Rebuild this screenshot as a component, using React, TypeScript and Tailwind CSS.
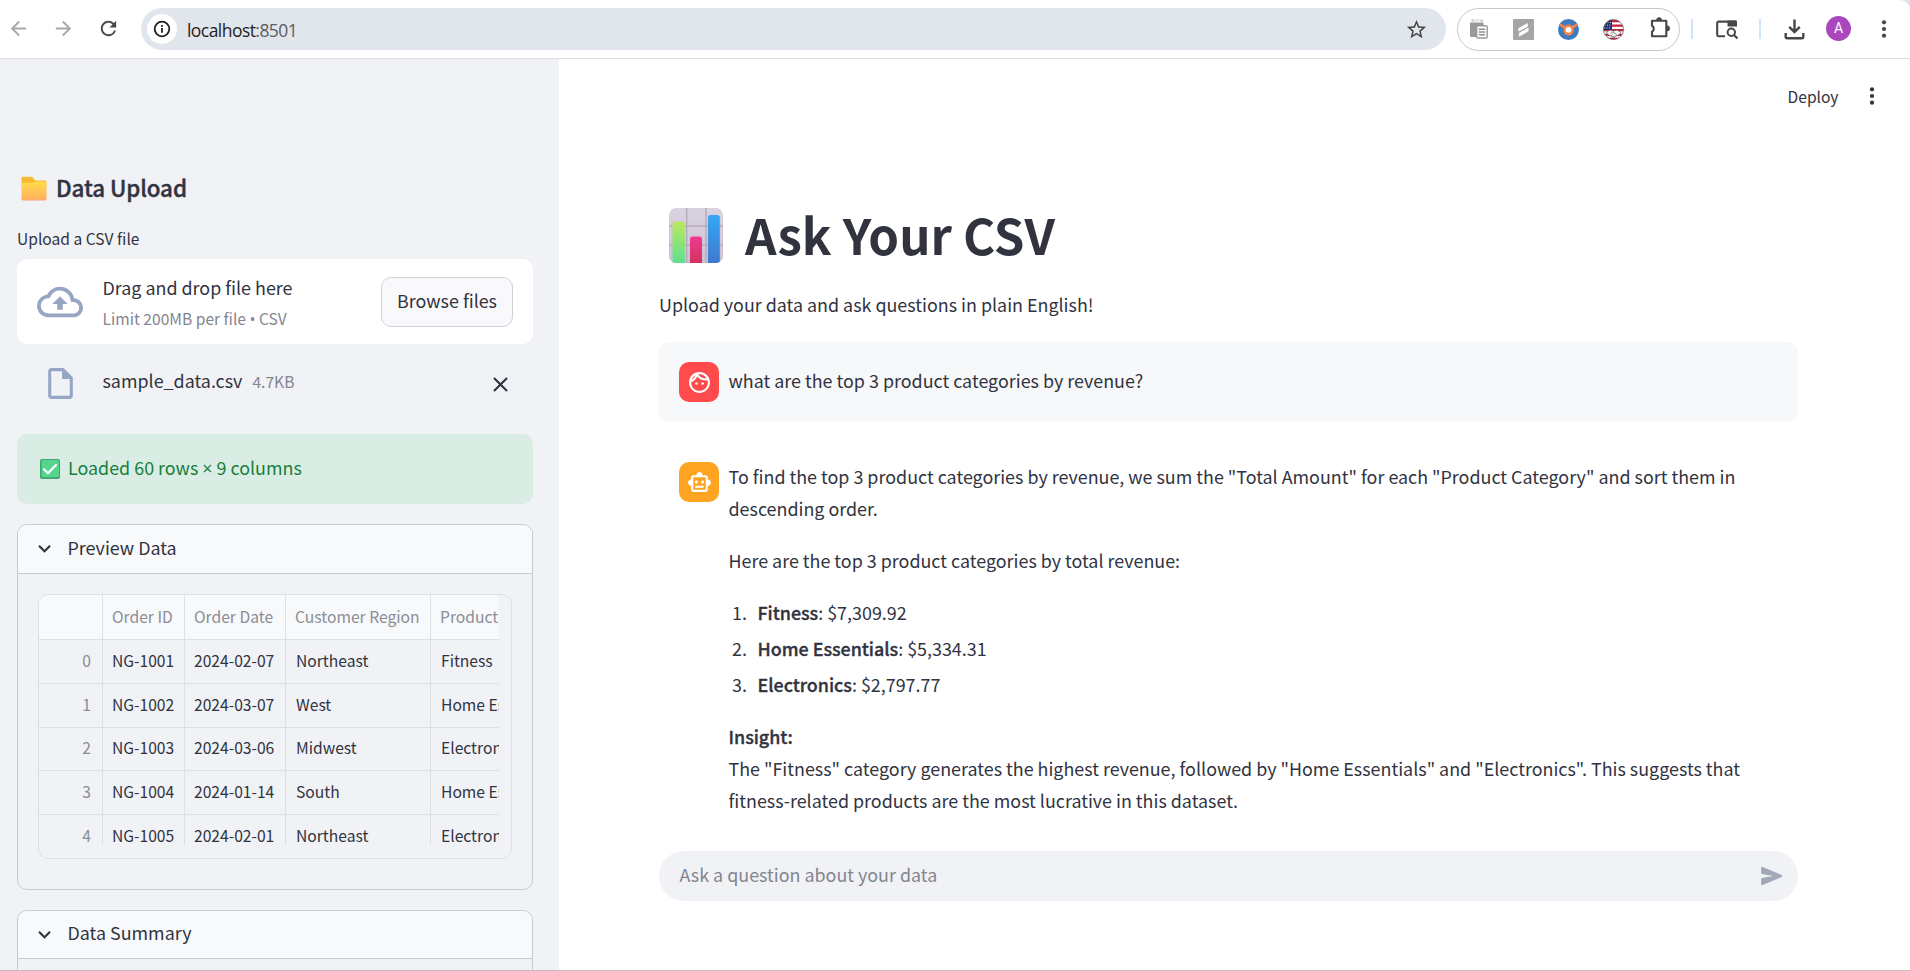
import type { ReactNode } from "react";
import {
  MdArrowBack,
  MdArrowForward,
  MdClose,
  MdKeyboardArrowDown,
  MdOutlineCloudUpload,
  MdOutlineFace,
  MdOutlineInsertDriveFile,
  MdOutlineSmartToy,
  MdRefresh,
  MdStarBorder,
} from "react-icons/md";

const rows = [
  { index: 0, id: "NG-1001", date: "2024-02-07", region: "Northeast", product: "Fitness", height: "h-[44px]" },
  { index: 1, id: "NG-1002", date: "2024-03-07", region: "West", product: "Home Essentials", height: "h-[44px]" },
  { index: 2, id: "NG-1003", date: "2024-03-06", region: "Midwest", product: "Electronics", height: "h-[43px]" },
  { index: 3, id: "NG-1004", date: "2024-01-14", region: "South", product: "Home Essentials", height: "h-[44px]" },
  { index: 4, id: "NG-1005", date: "2024-02-01", region: "Northeast", product: "Electronics", height: "h-[44px]" },
];

const results = [
  { name: "Fitness", value: "$7,309.92" },
  { name: "Home Essentials", value: "$5,334.31" },
  { name: "Electronics", value: "$2,797.77" },
];

function FolderEmoji() {
  return (
    <svg width="26" height="26" viewBox="0 0 26 26">
      <defs>
        <linearGradient id="folderFront" x1="0" y1="0" x2="0" y2="1">
          <stop offset="0" stopColor="#ffdc4c" />
          <stop offset="0.9" stopColor="#ffb35c" />
          <stop offset="1" stopColor="#f5a57c" />
        </linearGradient>
      </defs>
      <path d="M.5 2.3C.5 1.300 1.200.8 2 .8h8c.7 0 1.200.3 1.600.7l2.200 2.300c.4.4.9.6 1.400.6H24c.9 0 1.500.6 1.500 1.500V10H.5z" fill="#f9ba33" />
      <path d="M.5 8c0-.8.6-1.300 1.400-1.300h9.600c.8 0 1.300-.2 1.900-.6.5-.3 1-.4 1.600-.4h9c.9 0 1.500.6 1.500 1.500v15.600c0 1-.7 1.700-1.700 1.700H2.200C1.200 24.500.5 23.800.5 22.800z" fill="url(#folderFront)" />
    </svg>
  );
}

function CheckEmoji() {
  return (
    <svg width="20" height="20" viewBox="0 0 20 20">
      <rect width="20" height="20" rx="2" fill="#3fa372" />
      <rect x="1.500" y="1" width="17.500" height="17.300" rx="1.500" fill="#55d58c" />
      <path d="M4 10.300l4 4 8-8.300" fill="none" stroke="#fff" strokeWidth="2.200" strokeLinecap="round" strokeLinejoin="round" />
    </svg>
  );
}

function ChartEmoji() {
  return (
    <svg width="54" height="55" viewBox="0 0 54 55">
      <defs>
        <linearGradient id="panel" x1="0" y1="0" x2="0" y2="1">
          <stop offset="0" stopColor="#dad3df" />
          <stop offset="1" stopColor="#cdc0d6" />
        </linearGradient>
        <linearGradient id="barGreen" x1="0" y1="0" x2="0" y2="1">
          <stop offset="0" stopColor="#b9e860" />
          <stop offset="1" stopColor="#5fe08c" />
        </linearGradient>
        <linearGradient id="barPink" x1="0" y1="0" x2="0" y2="1">
          <stop offset="0" stopColor="#f0388f" />
          <stop offset="1" stopColor="#d3345f" />
        </linearGradient>
        <linearGradient id="barBlue" x1="0" y1="0" x2="0" y2="1">
          <stop offset="0" stopColor="#35a7f5" />
          <stop offset="1" stopColor="#3f78cf" />
        </linearGradient>
        <clipPath id="panelClip">
          <rect width="54" height="55" rx="7" />
        </clipPath>
      </defs>
      <g clipPath="url(#panelClip)">
        <rect width="54" height="55" fill="url(#panel)" />
        <path d="M17.700 0v55M37 0v55M0 18h54M0 37.300h54" stroke="#b5adb9" strokeWidth="1.500" />
        <path d="M3.500 16q0-2.500 2.500-2.500h7.300q2.500 0 2.500 2.500v39H3.500z" fill="url(#barGreen)" />
        <path d="M21 31q0-2.500 2.500-2.500h7q2.500 0 2.500 2.500v24H21z" fill="url(#barPink)" />
        <path d="M39 9.500Q39 7 41.500 7h6.800q2.500 0 2.500 2.500V55H39z" fill="url(#barBlue)" />
      </g>
    </svg>
  );
}

function PasteIcon() {
  return (
    <svg width="18" height="20" viewBox="0 0 18 20">
      <path d="M1.500 1.500h2.200M10.500 1.500h2.300" stroke="#b9b9b9" strokeWidth="2" />
      <path d="M4.500.3h5v2.200h-5z" fill="#e3e3e3" />
      <path d="M0 3.500h13.500V7H6v11H1.500A1.500 1.500 0 010 16.500z" fill="#9a9a9a" />
      <rect x="6.700" y="6.700" width="10.500" height="12.300" rx="1.200" fill="#fff" stroke="#9a9a9a" strokeWidth="1.400" />
      <path d="M8.800 10.200h6.400M8.800 13h6.400M8.800 15.800h6.400" stroke="#8e8e8e" strokeWidth="1.400" />
    </svg>
  );
}

function SlashIcon() {
  return (
    <svg width="21" height="21" viewBox="0 0 21 21">
      <rect width="21" height="21" rx="1" fill="#a5a5a5" />
      <path d="M5.500 9.600l9-5.200v3.400L6 12.600zM6.200 14l9-5v3.200l-9 5.100z" fill="#fff" stroke="#fff" strokeWidth=".6" />
      <path d="M5.300 13.300l10-5.300" stroke="#a5a5a5" strokeWidth="1" />
    </svg>
  );
}

function OrbitIcon() {
  return (
    <svg width="21" height="21" viewBox="0 0 21 21">
      <circle cx="10.500" cy="10.500" r="10.500" fill="#3d7bc1" />
      <path d="M.9 6.200L2 4.300l5 2.600a5 5 0 017 0l5-2.600 1.100 1.900-4.800 3.200a5.200 5.200 0 11-9.600 0z" fill="#f5834a" />
      <circle cx="10.500" cy="10.800" r="2.900" fill="#fff" />
    </svg>
  );
}

function FlagIcon() {
  return (
    <svg width="21" height="21" viewBox="0 0 21 21">
      <defs>
        <clipPath id="flagClip">
          <circle cx="10.500" cy="10.500" r="10" />
        </clipPath>
      </defs>
      <g clipPath="url(#flagClip)">
        <rect width="21" height="21" fill="#fff" />
        <path d="M0 2h21M0 6.600h21M0 11.200h21M0 15.800h21M0 20h21" stroke="#c8213b" strokeWidth="2.300" />
        <rect width="9" height="11" fill="#22326e" />
        <path d="M2 3.500h6M1.500 6.200h6.500M1 8.900h7" stroke="#cfd4e8" strokeWidth="1" strokeDasharray="1 1.500" />
        <path d="M3.500 13l3.500-2 3.500 1 3.500-1 3.800 2.200-1.500 2.300-5.800 3-5.800-3z" fill="#f6f6f6" stroke="#555" strokeWidth=".7" />
        <path d="M7.500 15l2.200-2.200 4.300 3.400M8 17l1.500-1.500M10 18l1.300-1.300" fill="none" stroke="#555" strokeWidth=".7" />
      </g>
      <circle cx="10.500" cy="10.500" r="10" fill="none" stroke="#5a4a5c" strokeWidth=".7" />
    </svg>
  );
}

function PuzzleIcon() {
  return (
    <svg width="21" height="21" viewBox="0 0 21 21">
      <path d="M2 3.800h14.300v15.400H2v-4.500a3.400 3.400 0 000-6z" fill="none" stroke="#474747" strokeWidth="2.100" strokeLinejoin="round" />
      <path d="M6.500 3.200a2.600 2.600 0 015.200 0zM17 8.700a2.700 2.700 0 010 5.400z" fill="#474747" stroke="#474747" strokeWidth=".6" />
    </svg>
  );
}

function TabSearchIcon() {
  return (
    <svg width="22" height="20" viewBox="0 0 22 20">
      <path d="M9 16.300H2.600A1.400 1.400 0 011.200 15V3A1.400 1.400 0 012.600 1.600H19.400V6" fill="none" stroke="#474747" strokeWidth="2.100" />
      <path d="M11.500.6h8.200A1.300 1.300 0 0121 1.900v4.700h-9.500z" fill="#474747" />
      <circle cx="15.300" cy="12.200" r="3.700" fill="#fff" stroke="#474747" strokeWidth="2" />
      <path d="M18 15l3.500 3.500" stroke="#474747" strokeWidth="2.200" />
    </svg>
  );
}

function DownloadIcon() {
  return (
    <svg width="21" height="21" viewBox="0 0 21 21">
      <path d="M10.500.5v12M5.200 7.800l5.300 5.300 5.300-5.300" fill="none" stroke="#474747" strokeWidth="2.400" />
      <path d="M1.700 14v3.700a1.500 1.500 0 001.500 1.500h14.600a1.500 1.500 0 001.500-1.500V14" fill="none" stroke="#474747" strokeWidth="2.400" />
    </svg>
  );
}

function Dots({ className }: { className: string }) {
  return (
    <svg width="6" height="20" viewBox="0 0 6 20" className={className} fill="currentColor">
      <circle cx="3" cy="3.300" r="2.100" />
      <circle cx="3" cy="10" r="2.100" />
      <circle cx="3" cy="16.700" r="2.100" />
    </svg>
  );
}

function SendIcon() {
  return (
    <svg width="26" height="26" viewBox="0 0 24 24" fill="#a3a8b8">
      <path d="M3.400 20.400l17.450-7.480a1 1 0 000-1.840L3.400 3.600a.993.993 0 00-1.390.91L2 9.120c0 .5.370.930.870.990L13 12 2.870 13.880c-.5.070-.870.5-.870 1l.010 4.610c0 .710.730 1.200 1.390.910z" />
    </svg>
  );
}

function BrowserBar() {
  return (
    <div className="bg-[#dfe3ea]">
      <header className="flex h-[59px] items-center rounded-tr-[10px] border-b border-[#dcdee1] bg-white">
        <div className="flex h-full items-center pb-0.5 pl-[7px] text-[#a9a9a9]">
          <MdArrowBack className="size-[23px]" />
          <MdArrowForward className="ml-[22px] size-[23px]" />
          <MdRefresh className="ml-[22px] size-[23px] text-[#474747]" />
        </div>
        <div className="ml-[21px] flex h-[42px] w-[1305px] items-center rounded-full bg-[#e1e6ed] pl-1.5">
          <div className="flex size-[30px] items-center justify-center rounded-full bg-white">
            <svg width="18" height="18" viewBox="0 0 18 18">
              <circle cx="9" cy="9" r="7.300" fill="none" stroke="#1f1f1f" strokeWidth="1.800" />
              <path d="M9 8v4.700M9 5v1.800" stroke="#1f1f1f" strokeWidth="1.800" />
            </svg>
          </div>
          <span className="ml-2.5 pt-px font-['Open_Sans',sans-serif] text-[17.500px] leading-6 tracking-[-0.550px] text-[#1f1f1f]">
            localhost<span className="text-[#5a5d61]">:8501</span>
          </span>
          <MdStarBorder className="mr-[18px] ml-auto size-[23px] text-[#474747]" />
        </div>
        <div className="ml-[11px] flex h-[43px] w-[223px] items-center rounded-full border border-[#c7c7c7] pl-3">
          <PasteIcon />
          <span className="ml-[25px]"><SlashIcon /></span>
          <span className="ml-6"><OrbitIcon /></span>
          <span className="ml-6"><FlagIcon /></span>
          <span className="ml-[26px] pb-[3px]"><PuzzleIcon /></span>
        </div>
        <div className="ml-[11px] h-5 w-0.5 bg-[#d3e3fd]" />
        <span className="ml-[23px] pt-0.5"><TabSearchIcon /></span>
        <div className="ml-[21px] h-5 w-0.5 bg-[#d3e3fd]" />
        <span className="ml-[23px]"><DownloadIcon /></span>
        <div className="mb-0.5 ml-[21px] flex size-[25px] items-center justify-center rounded-full bg-[#ab47bc] font-['Roboto',sans-serif] text-[14px] text-white">
          A
        </div>
        <Dots className="mb-px ml-[30px] text-[#474747]" />
      </header>
    </div>
  );
}

function ExpanderHeader({ title, className }: { title: string; className: string }) {
  return (
    <div className={`flex items-center border-b border-[#c8cad1] bg-[#f8f9fb] pl-[14px] ${className}`}>
      <MdKeyboardArrowDown className="mb-px size-[25px]" />
      <span className="ml-[10.500px] pb-1">{title}</span>
    </div>
  );
}

function Cell({ className, children }: { className: string; children?: ReactNode }) {
  return (
    <div className={`shrink-0 border-r border-b border-[#dddfe4] pr-1 pl-[9px] ${className}`}>
      <div className="flex h-full items-center whitespace-nowrap">{children}</div>
    </div>
  );
}

function DataTable() {
  return (
    <div className="h-[265px] w-[474px] overflow-hidden rounded-[10px] border border-[#dddfe4]">
      <div className="h-[250px] w-[460px] overflow-hidden text-[15.650px] leading-5">
        <div className="flex h-[45px] w-[560px] bg-[#f8f9fb] text-[#8b8d97]">
          <Cell className="w-[64px]" />
          <Cell className="w-[82px]">Order ID</Cell>
          <Cell className="w-[101px]">Order Date</Cell>
          <Cell className="w-[145px]">Customer Region</Cell>
          <Cell className="w-[168px]">Product Category</Cell>
        </div>
        {rows.map((row) => (
          <div key={row.index} className={`flex w-[560px] ${row.height}`}>
            <Cell className="w-[64px] pb-0.5">
              <span className="ml-auto pr-[7px] text-[#8b8d97]">{row.index}</span>
            </Cell>
            <Cell className="w-[82px] pb-0.5">{row.id}</Cell>
            <Cell className="w-[101px] pb-0.5">{row.date}</Cell>
            <Cell className="w-[145px] pb-0.5"><span className="pl-px">{row.region}</span></Cell>
            <Cell className="w-[168px] pb-0.5"><span className="pl-px">{row.product}</span></Cell>
          </div>
        ))}
      </div>
    </div>
  );
}

function Sidebar() {
  return (
    <aside className="w-[559px] shrink-0 overflow-hidden bg-[#f0f2f6] pt-[113px] pr-[26px] pl-[17px]">
      <h2 className="flex h-[30px] items-center text-[22.400px] leading-[30px] font-medium tracking-[-0.100px] [-webkit-text-stroke:0.4px_#31333f]">
        <span className="mr-[9px] ml-1 pt-1"><FolderEmoji /></span>
        Data Upload
      </h2>
      <p className="mt-[23px] text-[15.600px] leading-[26px]">Upload a CSV file</p>
      <div className="mt-2 flex h-[85px] items-center rounded-[10px] bg-white pr-5 pl-5">
        <MdOutlineCloudUpload className="size-[46px] text-[#98a6c6]" />
        <div className="mt-0.5 ml-[19.500px] flex flex-col gap-[7px]">
          <span className="leading-6">Drag and drop file here</span>
          <span className="text-[15.600px] leading-6 text-[#83858f]">
            Limit 200MB per file <span className="font-['Open_Sans',sans-serif] text-[16px] leading-4">•</span> CSV
          </span>
        </div>
        <button className="ml-auto h-[50px] w-[132px] rounded-[10px] border border-[#d0d2d8] bg-[#f9f9fb] pb-1 leading-6">
          Browse files
        </button>
      </div>
      <div className="flex h-[90px] items-start pt-[21px] pr-5 pl-[24.500px]">
        <MdOutlineInsertDriveFile className="size-[37px] text-[#98a6c6]" />
        <span className="mt-[3px] ml-6 leading-6">sample_data.csv</span>
        <span className="mt-[3px] ml-2.5 text-[15.600px] leading-[26px] text-[#83858f]">4.7KB</span>
        <MdClose className="mt-[7px] ml-auto size-[25px]" />
      </div>
      <div className="flex h-[70px] items-center rounded-[10px] bg-[#daede5] pl-[23px] text-[#177f3b]">
        <CheckEmoji />
        <span className="ml-2 pb-0.5 whitespace-pre">
          Loaded 60 rows <span className="font-['Open_Sans',sans-serif]">×</span> 9 columns
        </span>
      </div>
      <section className="mt-5 h-[366px] overflow-hidden rounded-[10px] border border-[#c8cad1]">
        <ExpanderHeader title="Preview Data" className="h-[49px]" />
        <div className="pt-5 pl-5">
          <DataTable />
        </div>
      </section>
      <section className="mt-5 h-[366px] overflow-hidden rounded-[10px] border border-[#c8cad1]">
        <ExpanderHeader title="Data Summary" className="h-12" />
      </section>
    </aside>
  );
}

function Strong({ children }: { children: ReactNode }) {
  return <strong className="font-medium tracking-[-0.020px] [-webkit-text-stroke:0.35px_#31333f]">{children}</strong>;
}

function Chat() {
  return (
    <main className="flex min-w-0 grow flex-col bg-white pr-[112px] pl-[100px]">
      <div className="mr-[-112px] flex h-[75px] shrink-0 items-center justify-end pr-[35.500px] text-[15.600px]">
        <span className="pb-0.5 leading-6">Deploy</span>
        <Dots className="mb-px ml-[30px]" />
      </div>
      <h1 className="mt-[67px] flex h-[66px] items-center text-[49.200px] leading-[66px] font-bold">
        <span className="mr-[22px] ml-[10px] pt-0.5"><ChartEmoji /></span>
        Ask Your CSV
      </h1>
      <p className="mt-[21px] leading-8">Upload your data and ask questions in plain English!</p>
      <div className="mt-[22px] flex h-20 shrink-0 items-start rounded-[10px] bg-[#f7f8fa] p-5">
        <div className="flex size-10 items-center justify-center rounded-[10px] bg-[#ff4b4b]">
          <MdOutlineFace className="size-[25px] text-white" />
        </div>
        <p className="mt-0.5 ml-[9.500px] leading-8">what are the top 3 product categories by revenue?</p>
      </div>
      <div className="mt-10 flex items-start pl-5">
        <div className="flex size-10 shrink-0 items-center justify-center rounded-[10px] bg-[#ffa421]">
          <MdOutlineSmartToy className="size-[25px] text-white" />
        </div>
        <div className="mt-[-2px] ml-[9.500px] leading-8">
          <p className="whitespace-nowrap">
            To find the top 3 product categories by revenue, we sum the "Total Amount" for each "Product Category" and sort them in
            <br />
            descending order.
          </p>
          <p className="mt-5">Here are the top 3 product categories by total revenue:</p>
          <ol className="mt-5 flex flex-col gap-1 pl-[3.500px]">
            {results.map((item, i) => (
              <li key={item.name} className="flex">
                <span className="w-[25.500px]">{i + 1}.</span>
                <span>
                  <Strong>{item.name}</Strong>: {item.value}
                </span>
              </li>
            ))}
          </ol>
          <p className="mt-5 whitespace-nowrap">
            <Strong>Insight:</Strong>
            <br />
            The "Fitness" category generates the highest revenue, followed by "Home Essentials" and "Electronics". This suggests that
            <br />
            fitness-related products are the most lucrative in this dataset.
          </p>
        </div>
      </div>
      <div className="mt-[35px] flex h-[50px] shrink-0 items-center rounded-full bg-[#f0f2f6] pr-[13px] pl-[20.500px]">
        <span className="pb-[5px] leading-6 text-[#83858f]">Ask a question about your data</span>
        <span className="ml-auto"><SendIcon /></span>
      </div>
    </main>
  );
}

export default function App() {
  return (
    <div className="flex h-[971px] w-[1910px] flex-col overflow-hidden border-b border-[#bdbdbd] bg-white font-['Noto_Sans_CJK_SC',sans-serif] text-[17.900px] text-[#31333f]">
      <BrowserBar />
      <div className="flex min-h-0 grow">
        <Sidebar />
        <Chat />
      </div>
    </div>
  );
}
